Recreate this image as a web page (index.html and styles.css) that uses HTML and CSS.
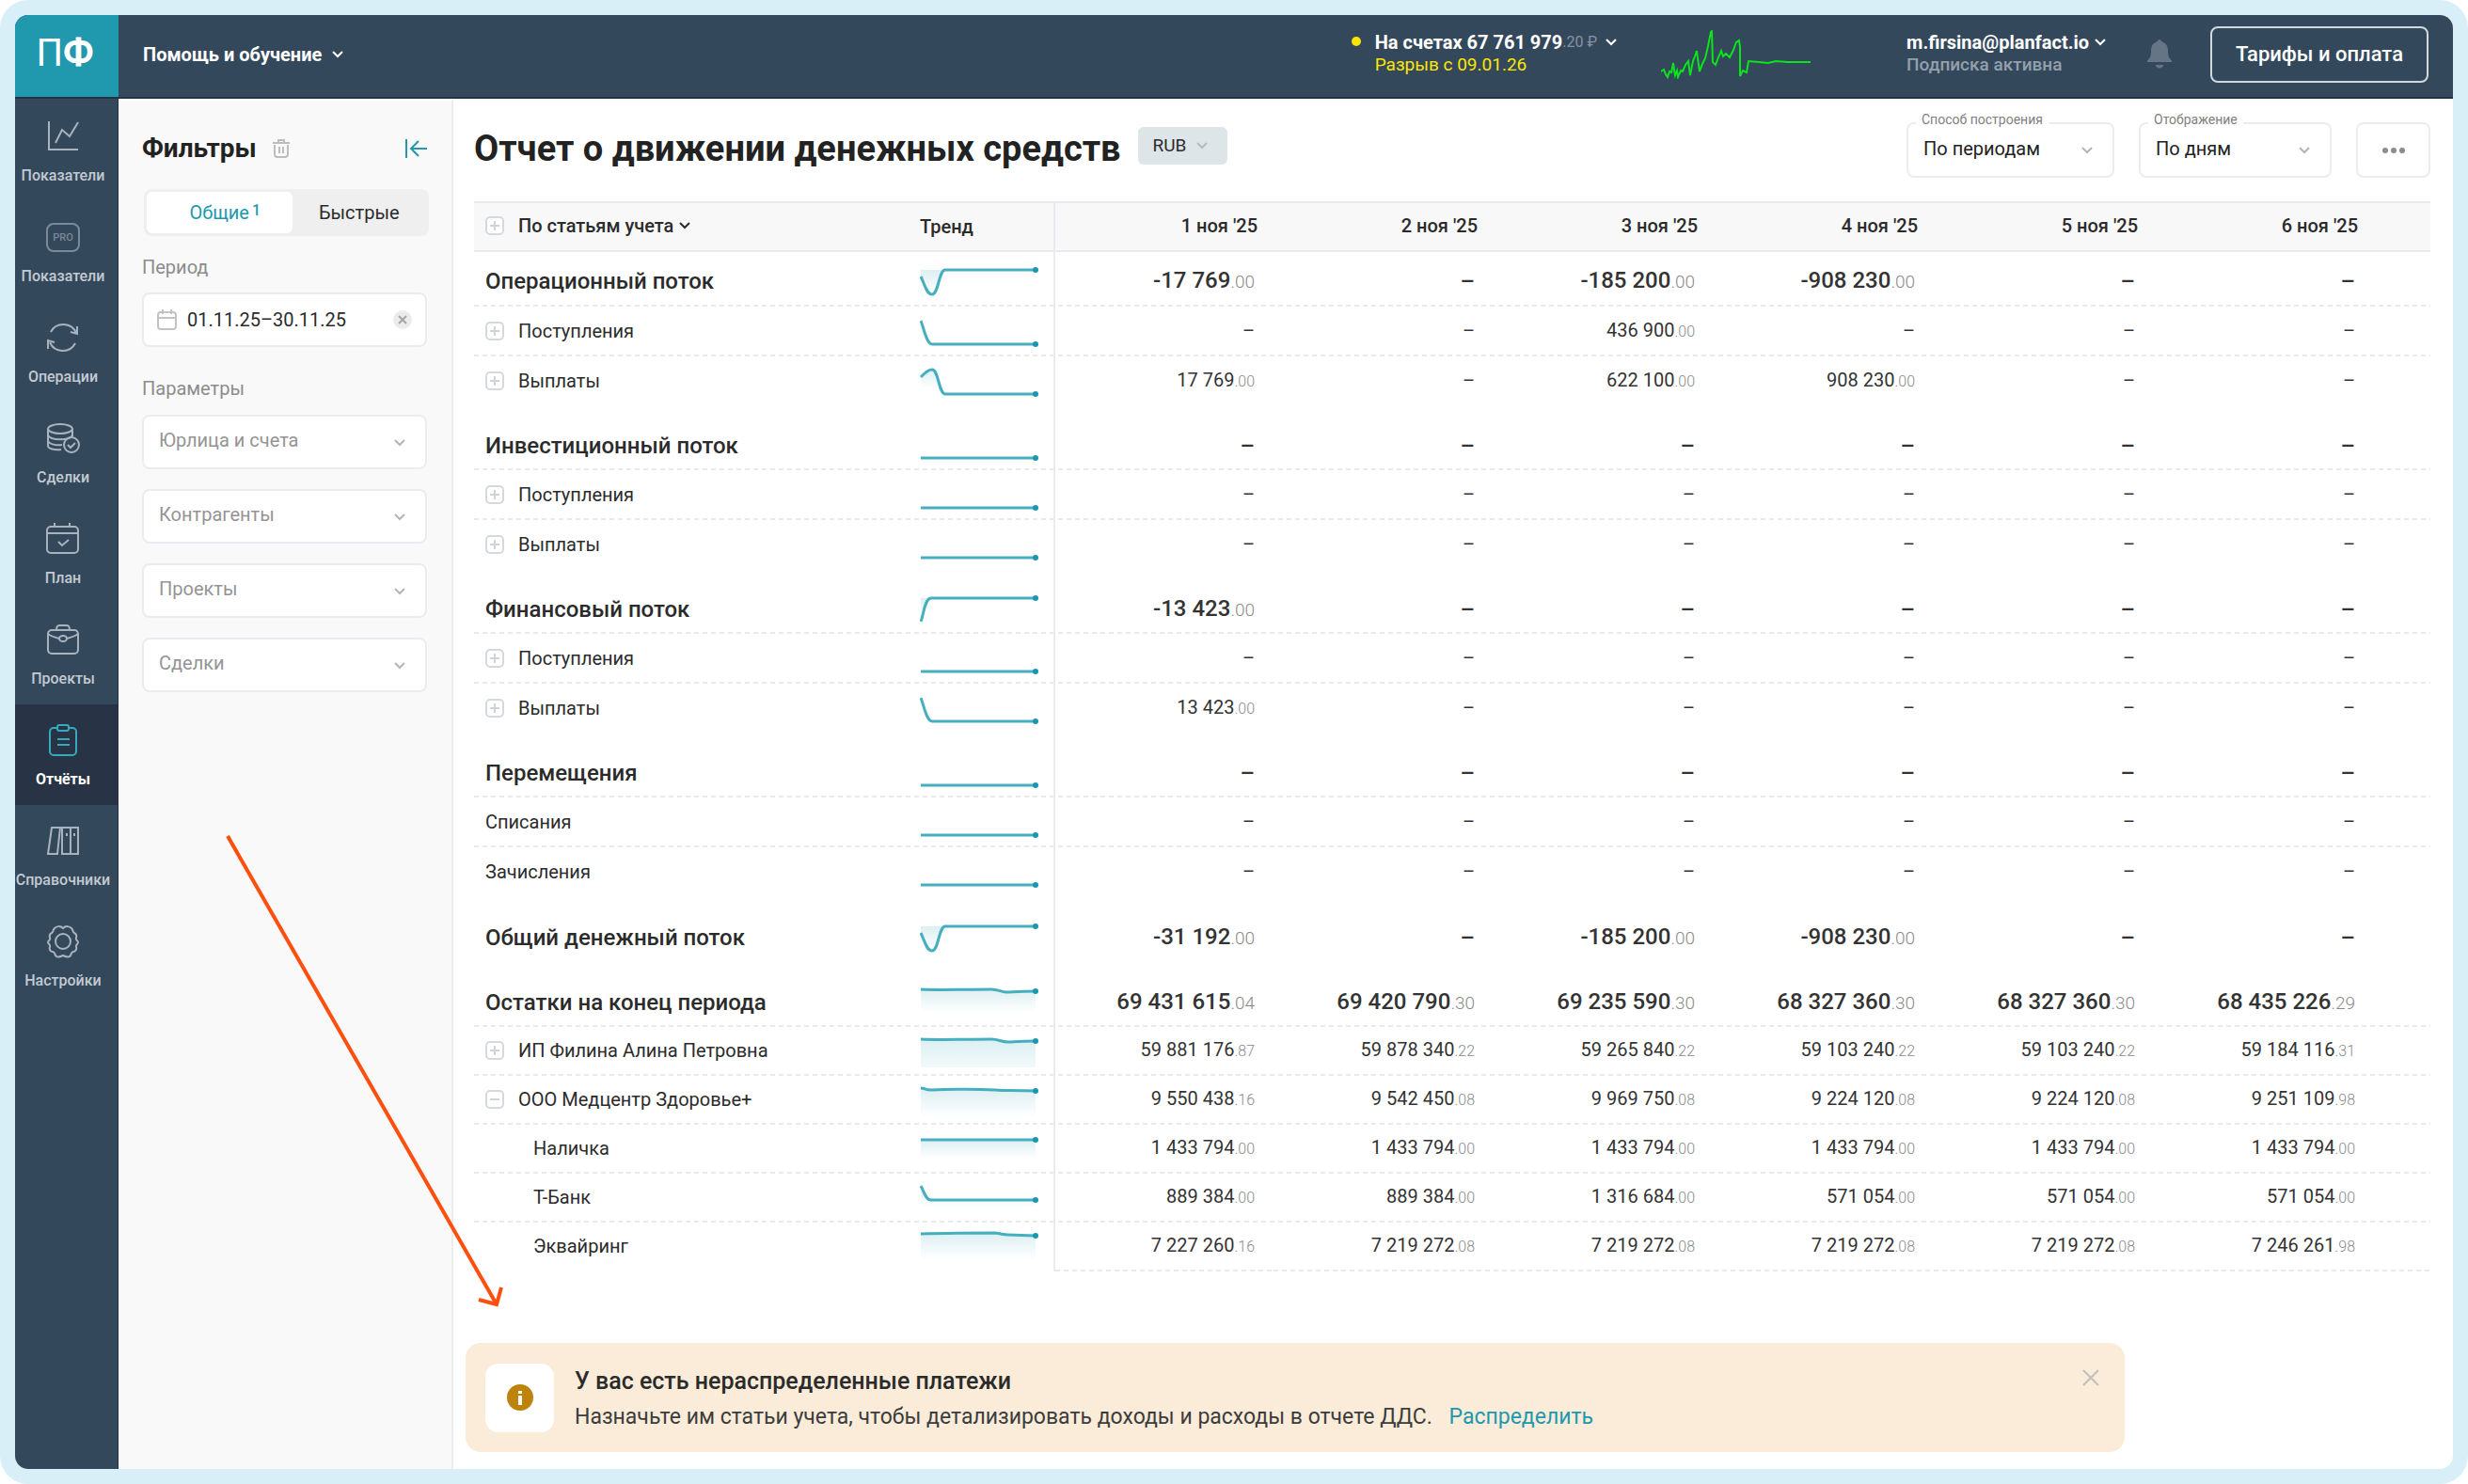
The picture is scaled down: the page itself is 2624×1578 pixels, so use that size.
FILE: index.html
```html
<!DOCTYPE html>
<html lang="ru">
<head>
<meta charset="utf-8">
<meta name="viewport" content="width=device-width, initial-scale=1">
<title>Отчет о движении денежных средств</title>
<link rel="stylesheet" href="styles.css">
</head>
<body>
<svg class="sprite" aria-hidden="true">
  <defs>
    <linearGradient id="fade" x1="0" y1="0" x2="0" y2="1"><stop offset="0" stop-color="#2a9db0" stop-opacity=".16"/><stop offset="1" stop-color="#2a9db0" stop-opacity="0"/></linearGradient>
    <linearGradient id="haze" x1="0" y1="0" x2="0" y2="1"><stop offset="0" stop-color="#2a9db0" stop-opacity=".16"/><stop offset="1" stop-color="#2a9db0" stop-opacity=".06"/></linearGradient>
  </defs>
  <symbol id="chev" viewBox="0 0 14 10"><path d="M2 2l5 5 5-5" fill="none" stroke="currentColor" stroke-width="2"/></symbol>
  <symbol id="plus" viewBox="0 0 20 20"><rect x="1" y="1" width="18" height="18" rx="4" fill="#fff" stroke="#d5d8dc" stroke-width="2"/><path d="M5 10h10M10 5v10" stroke="#cfd3d8" stroke-width="2"/></symbol>
  <symbol id="minus" viewBox="0 0 20 20"><rect x="1" y="1" width="18" height="18" rx="4" fill="#fff" stroke="#d5d8dc" stroke-width="2"/><path d="M5 10h10" stroke="#cfd3d8" stroke-width="2"/></symbol>
  <symbol id="s-dip" viewBox="0 0 128 52"><path class="area" d="M1 15V22C5 30 7 41 13 41C20 41 20 15 27 15z"/><path class="line" d="M1 22C5 30 7 41 13 41C20 41 20 15 27 15H123"/><circle class="dot" cx="123" cy="15" r="3"/></symbol>
  <symbol id="s-drop" viewBox="0 0 128 52"><path class="line" d="M1 15C4 22 7 40 13 40H123"/><circle class="dot" cx="123" cy="40" r="3"/></symbol>
  <symbol id="s-hump" viewBox="0 0 128 52"><path class="area" d="M1 34V22C5 18 8 14 13 14C18 14 20 28 22 34z"/><path class="line" d="M1 22C5 18 8 14 13 14C20 14 20 40 27 40H123"/><circle class="dot" cx="123" cy="40" r="3"/></symbol>
  <symbol id="s-flat" viewBox="0 0 128 52"><path class="line" d="M1 40H123"/><circle class="dot" cx="123" cy="40" r="3"/></symbol>
  <symbol id="s-rise" viewBox="0 0 128 52"><path class="area" d="M1 15V34C4 24 6 15 11 15z"/><path class="line" d="M1 40C4 33 5 15 12 15H123"/><circle class="dot" cx="123" cy="15" r="3"/></symbol>
  <symbol id="s-total" viewBox="0 0 128 52"><path class="area" d="M1 13H83L92 15H123V37H1z"/><path class="line" d="M1 13C20 14 50 13 76 13C84 13 86 16 92 16C98 16 102 15 123 15"/><circle class="dot" cx="123" cy="15" r="3"/></symbol>
  <symbol id="s-person" viewBox="0 0 128 52"><path class="haze" d="M1 13H83L92 15H123V43H1z"/><path class="line" d="M1 13C20 14 50 13 76 13C84 13 86 16 94 16C100 16 102 15 123 15"/><circle class="dot" cx="123" cy="15" r="3"/></symbol>
  <symbol id="s-company" viewBox="0 0 128 52"><path class="area" d="M1 13L10 15H123V44H1z"/><path class="line" d="M1 13C6 13 5 15 12 15C40 14 60 14 80 15C92 16 100 15 123 16"/><circle class="dot" cx="123" cy="16" r="3"/></symbol>
  <symbol id="s-cash" viewBox="0 0 128 52"><path class="area" d="M1 16H123V36H1z"/><path class="line" d="M1 16H123"/><circle class="dot" cx="123" cy="16" r="3"/></symbol>
  <symbol id="s-bank" viewBox="0 0 128 52"><path class="area" d="M1 14L10 28H123V36H1z"/><path class="line" d="M1 13C4 18 6 28 12 28H123"/><circle class="dot" cx="123" cy="28" r="3"/></symbol>
  <symbol id="s-acq" viewBox="0 0 128 52"><path class="area" d="M1 11H83L92 13H123V40H1z"/><path class="line" d="M1 12C30 11 70 11 80 11C88 12 88 13 94 13L123 14"/><circle class="dot" cx="123" cy="14" r="3"/></symbol>
</svg>

<div class="frame">
  <header class="topbar">
    <a class="logo" href="#" aria-label="ПланФакт"><span>П</span><b>Ф</b></a>
    <div class="topbar-main">
      <button class="help" type="button">Помощь и обучение <svg class="chev"><use href="#chev"/></svg></button>
      <div class="balance">
        <span class="status-dot"></span>
        <div class="stack">
          <button class="stack-top" type="button">На счетах 67 761 979<small>.20 ₽</small><svg class="chev"><use href="#chev"/></svg></button>
          <span class="gap-alert">Разрыв с 09.01.26</span>
        </div>
      </div>
      <svg class="pulse" viewBox="0 0 159 52" aria-hidden="true"><path d="M0 44L3 42L5 47L7 50L9 44L11 45L13 35L14 42L15 48L17 43L18 50L21 43L23 44L26 37L29 33L31 48L34 33L36 28L38 22L39 30L41 44L44 36L47 30L50 17L53 2L54 1L55 34L58 37L61 29L64 22L66 28L69 25L73 29L77 21L80 13L83 11L84 18L84 49L87 43L91 45L93 33L104 34L114 35L122 33L134 34H159"/></svg>
      <div class="stack account">
        <button class="stack-top" type="button">m.firsina@planfact.io<svg class="chev"><use href="#chev"/></svg></button>
        <span class="plan-state">Подписка активна</span>
      </div>
      <button class="bell" type="button" aria-label="Уведомления"><svg viewBox="0 0 26 32"><path d="M13 0c1.500 0 2 1 2.300 2.300C20 3.500 22 7.500 22 12c0 6 1.500 8.500 4 10.500V24H0v-1.500C2.500 20.500 4 18 4 12c0-4.500 2-8.500 6.700-9.700C11 1 11.500 0 13 0zM8.500 27h9c-.8 2-2.500 3.500-4.500 3.500S9.300 29 8.500 27z"/></svg></button>
      <a class="tariffs" href="#">Тарифы и оплата</a>
    </div>
  </header>

  <div class="body">
    <nav class="sidebar">
      <a href="#"><svg viewBox="0 0 36 36"><path d="M3 2v30h31M10 25l7-14 8 7 9-15"/></svg>Показатели</a>
      <a href="#"><svg viewBox="0 0 36 36" class="dim"><rect x="1" y="4" width="34" height="29" rx="7"/><text x="18" y="22" text-anchor="middle">PRO</text></svg>Показатели</a>
      <a href="#"><svg viewBox="0 0 36 36"><path d="M5 12a15 15 0 0 1 27 1M31 24a15 15 0 0 1-27-1M33 6v8l-7-2M2 30v-9l7 2"/></svg>Операции</a>
      <a href="#"><svg viewBox="0 0 36 36"><ellipse cx="15" cy="8" rx="13" ry="5"/><path d="M2 8v18c0 3 7 5 14 4M28 8v8M2 14c0 7 26 7 26 0M2 20c0 4 8 6 15 5"/><circle cx="27" cy="25" r="8"/><path d="M23 25l3 3 5-5"/></svg>Сделки</a>
      <a href="#"><svg viewBox="0 0 36 36"><rect x="1" y="5" width="33" height="28" rx="4"/><path d="M1 12h33M9 1v5M25 1v5M13 21l4 4 7-6"/></svg>План</a>
      <a href="#"><svg viewBox="0 0 36 36"><rect x="2" y="8" width="32" height="25" rx="4"/><path d="M11 8c0-3 1-5 3-5h8c2 0 3 2 3 5M2 12c4 3 8 4 12 5M34 12c-4 3-8 4-12 5"/><ellipse cx="18" cy="17" rx="4" ry="3"/></svg>Проекты</a>
      <a href="#" class="active" aria-current="page"><svg viewBox="0 0 36 36"><path d="M12 5H8a4 4 0 0 0-4 4v21a4 4 0 0 0 4 4h20a4 4 0 0 0 4-4V9a4 4 0 0 0-4-4h-4M12 17h13M12 23h13"/><rect x="12" y="2" width="12" height="6" rx="2"/></svg>Отчёты</a>
      <a href="#"><svg viewBox="0 0 36 36"><path d="M6 4h9l-3 28H2zM17 4h9v28h-9zM26 4h8v28h-8zM22 10v3M30 10v3"/></svg>Справочники</a>
      <a href="#"><svg viewBox="0 0 36 36"><path d="M18 4c3-3 7-2 9 0s1 4 3 5 3 2 2 5 2 3 2 5-3 3-2 5-1 5-3 5-2 2-3 4-4 2-8 0c-4 2-7 2-8 0s-1-4-3-4-4-2-3-5-2-3-2-5 3-2 2-5 0-4 2-5 1-3 3-5 6-3 9 0z"/><circle cx="18" cy="18" r="8"/></svg>Настройки</a>
    </nav>

    <aside class="filters">
      <div class="filters-head">
        <h2>Фильтры</h2>
        <button class="icon-btn" type="button" aria-label="Очистить фильтры"><svg class="trash" viewBox="0 0 18 20"><path d="M0 4h18M6 4V1h6v3M2 6v10a3 3 0 0 0 3 3h8a3 3 0 0 0 3-3V6M7 8v7M11 8v7"/></svg></button>
        <button class="icon-btn collapse" type="button" aria-label="Свернуть"><svg viewBox="0 0 24 20"><path d="M2 0v20M8 10h16M15 2l-8 8 8 8"/></svg></button>
      </div>
      <div class="tabs">
        <button class="tab on" type="button">Общие<sup>1</sup></button>
        <button class="tab" type="button">Быстрые</button>
      </div>
      <label class="caption" for="period">Период</label>
      <div class="field">
        <svg class="cal" viewBox="0 0 21 22"><rect x="1" y="3" width="19" height="18" rx="3"/><path d="M1 9h19M6 0v5M15 0v5"/></svg>
        <input id="period" type="text" value="01.11.25–30.11.25">
        <button class="clear" type="button" aria-label="Сбросить период"><svg viewBox="0 0 20 20"><path d="M6 6l8 8M14 6l-8 8"/></svg></button>
      </div>
      <p class="caption params">Параметры</p>
      <div class="selects">
        <div class="select"><select aria-label="Юрлица и счета"><option>Юрлица и счета</option></select><svg class="chev"><use href="#chev"/></svg></div>
        <div class="select"><select aria-label="Контрагенты"><option>Контрагенты</option></select><svg class="chev"><use href="#chev"/></svg></div>
        <div class="select"><select aria-label="Проекты"><option>Проекты</option></select><svg class="chev"><use href="#chev"/></svg></div>
        <div class="select"><select aria-label="Сделки"><option>Сделки</option></select><svg class="chev"><use href="#chev"/></svg></div>
      </div>
    </aside>

    <main class="report">
      <div class="report-head">
        <h1>Отчет о движении денежных средств</h1>
        <button class="currency" type="button">RUB <svg class="chev"><use href="#chev"/></svg></button>
        <div class="controls">
          <div class="select titled wide"><label for="mode">Способ построения</label><select id="mode"><option>По периодам</option></select><svg class="chev"><use href="#chev"/></svg></div>
          <div class="select titled"><label for="scale">Отображение</label><select id="scale"><option>По дням</option></select><svg class="chev"><use href="#chev"/></svg></div>
          <button class="more" type="button" aria-label="Ещё"><svg viewBox="0 0 26 8"><circle cx="4" cy="4" r="3"/><circle cx="13" cy="4" r="3"/><circle cx="22" cy="4" r="3"/></svg></button>
        </div>
      </div>

      <table class="grid">
        <colgroup><col class="c-name"><col class="c-trend"><col><col><col><col><col><col><col class="c-rest"></colgroup>
        <thead>
          <tr><th class="name"><div class="cell"><button class="toggle" type="button" aria-label="Развернуть все"><svg><use href="#plus"/></svg></button><button class="by" type="button">По статьям учета <svg class="chev"><use href="#chev"/></svg></button></div></th><th class="trend">Тренд</th><th>1 ноя '25</th><th>2 ноя '25</th><th>3 ноя '25</th><th>4 ноя '25</th><th>5 ноя '25</th><th>6 ноя '25</th><td></td></tr>
        </thead>
        <tbody>
          <tr class="group first"><th class="name">Операционный поток</th><td class="trend"><svg><use href="#s-dip"/></svg></td><td>-17 769<small>.00</small></td><td>–</td><td>-185 200<small>.00</small></td><td>-908 230<small>.00</small></td><td>–</td><td>–</td><td></td></tr>
          <tr><th class="name"><div class="cell"><button class="toggle" type="button" aria-label="Развернуть"><svg><use href="#plus"/></svg></button>Поступления</div></th><td class="trend"><svg><use href="#s-drop"/></svg></td><td>–</td><td>–</td><td>436 900<small>.00</small></td><td>–</td><td>–</td><td>–</td><td></td></tr>
          <tr class="end"><th class="name"><div class="cell"><button class="toggle" type="button" aria-label="Развернуть"><svg><use href="#plus"/></svg></button>Выплаты</div></th><td class="trend"><svg><use href="#s-hump"/></svg></td><td>17 769<small>.00</small></td><td>–</td><td>622 100<small>.00</small></td><td>908 230<small>.00</small></td><td>–</td><td>–</td><td></td></tr>
        </tbody>
        <tbody>
          <tr class="group"><th class="name">Инвестиционный поток</th><td class="trend"><svg><use href="#s-flat"/></svg></td><td>–</td><td>–</td><td>–</td><td>–</td><td>–</td><td>–</td><td></td></tr>
          <tr><th class="name"><div class="cell"><button class="toggle" type="button" aria-label="Развернуть"><svg><use href="#plus"/></svg></button>Поступления</div></th><td class="trend"><svg><use href="#s-flat"/></svg></td><td>–</td><td>–</td><td>–</td><td>–</td><td>–</td><td>–</td><td></td></tr>
          <tr class="end"><th class="name"><div class="cell"><button class="toggle" type="button" aria-label="Развернуть"><svg><use href="#plus"/></svg></button>Выплаты</div></th><td class="trend"><svg><use href="#s-flat"/></svg></td><td>–</td><td>–</td><td>–</td><td>–</td><td>–</td><td>–</td><td></td></tr>
        </tbody>
        <tbody>
          <tr class="group"><th class="name">Финансовый поток</th><td class="trend"><svg><use href="#s-rise"/></svg></td><td>-13 423<small>.00</small></td><td>–</td><td>–</td><td>–</td><td>–</td><td>–</td><td></td></tr>
          <tr><th class="name"><div class="cell"><button class="toggle" type="button" aria-label="Развернуть"><svg><use href="#plus"/></svg></button>Поступления</div></th><td class="trend"><svg><use href="#s-flat"/></svg></td><td>–</td><td>–</td><td>–</td><td>–</td><td>–</td><td>–</td><td></td></tr>
          <tr class="end"><th class="name"><div class="cell"><button class="toggle" type="button" aria-label="Развернуть"><svg><use href="#plus"/></svg></button>Выплаты</div></th><td class="trend"><svg><use href="#s-drop"/></svg></td><td>13 423<small>.00</small></td><td>–</td><td>–</td><td>–</td><td>–</td><td>–</td><td></td></tr>
        </tbody>
        <tbody>
          <tr class="group"><th class="name">Перемещения</th><td class="trend"><svg><use href="#s-flat"/></svg></td><td>–</td><td>–</td><td>–</td><td>–</td><td>–</td><td>–</td><td></td></tr>
          <tr><th class="name">Списания</th><td class="trend"><svg><use href="#s-flat"/></svg></td><td>–</td><td>–</td><td>–</td><td>–</td><td>–</td><td>–</td><td></td></tr>
          <tr class="end"><th class="name">Зачисления</th><td class="trend"><svg><use href="#s-flat"/></svg></td><td>–</td><td>–</td><td>–</td><td>–</td><td>–</td><td>–</td><td></td></tr>
        </tbody>
        <tbody class="totals">
          <tr class="group end"><th class="name">Общий денежный поток</th><td class="trend"><svg><use href="#s-dip"/></svg></td><td>-31 192<small>.00</small></td><td>–</td><td>-185 200<small>.00</small></td><td>-908 230<small>.00</small></td><td>–</td><td>–</td><td></td></tr>
          <tr class="group"><th class="name">Остатки на конец периода</th><td class="trend"><svg><use href="#s-total"/></svg></td><td>69 431 615<small>.04</small></td><td>69 420 790<small>.30</small></td><td>69 235 590<small>.30</small></td><td>68 327 360<small>.30</small></td><td>68 327 360<small>.30</small></td><td>68 435 226<small>.29</small></td><td></td></tr>
          <tr><th class="name"><div class="cell"><button class="toggle" type="button" aria-label="Развернуть"><svg><use href="#plus"/></svg></button>ИП Филина Алина Петровна</div></th><td class="trend"><svg><use href="#s-person"/></svg></td><td>59 881 176<small>.87</small></td><td>59 878 340<small>.22</small></td><td>59 265 840<small>.22</small></td><td>59 103 240<small>.22</small></td><td>59 103 240<small>.22</small></td><td>59 184 116<small>.31</small></td><td></td></tr>
          <tr><th class="name"><div class="cell"><button class="toggle" type="button" aria-label="Свернуть"><svg><use href="#minus"/></svg></button>ООО Медцентр Здоровье+</div></th><td class="trend"><svg><use href="#s-company"/></svg></td><td>9 550 438<small>.16</small></td><td>9 542 450<small>.08</small></td><td>9 969 750<small>.08</small></td><td>9 224 120<small>.08</small></td><td>9 224 120<small>.08</small></td><td>9 251 109<small>.98</small></td><td></td></tr>
          <tr><th class="name child">Наличка</th><td class="trend"><svg><use href="#s-cash"/></svg></td><td>1 433 794<small>.00</small></td><td>1 433 794<small>.00</small></td><td>1 433 794<small>.00</small></td><td>1 433 794<small>.00</small></td><td>1 433 794<small>.00</small></td><td>1 433 794<small>.00</small></td><td></td></tr>
          <tr><th class="name child">Т-Банк</th><td class="trend"><svg><use href="#s-bank"/></svg></td><td>889 384<small>.00</small></td><td>889 384<small>.00</small></td><td>1 316 684<small>.00</small></td><td>571 054<small>.00</small></td><td>571 054<small>.00</small></td><td>571 054<small>.00</small></td><td></td></tr>
          <tr class="last"><th class="name child">Эквайринг</th><td class="trend"><svg><use href="#s-acq"/></svg></td><td>7 227 260<small>.16</small></td><td>7 219 272<small>.08</small></td><td>7 219 272<small>.08</small></td><td>7 219 272<small>.08</small></td><td>7 219 272<small>.08</small></td><td>7 246 261<small>.98</small></td><td></td></tr>
        </tbody>
      </table>

      <section class="notice">
        <span class="notice-icon"><svg viewBox="0 0 28 28"><circle cx="14" cy="14" r="14"/><path d="M12 12h4v10h-4zM12 7h4v3h-4z"/></svg></span>
        <div class="notice-text">
          <h3>У вас есть нераспределенные платежи</h3>
          <p>Назначьте им статьи учета, чтобы детализировать доходы и расходы в отчете ДДС. <a href="#">Распределить</a></p>
        </div>
        <button class="icon-btn close" type="button" aria-label="Закрыть"><svg viewBox="0 0 18 18"><path d="M1 1l16 16M17 1L1 17"/></svg></button>
      </section>
    </main>
  </div>
  <svg class="pointer" viewBox="0 0 300 510" aria-hidden="true"><path d="M2 2L288 500M269 495l19 5 5-18"/></svg>
</div>
</body>
</html>
```
FILE: styles.css
```css
* { box-sizing: border-box; }
body { margin: 0; background: #fff; color: #2b2b2b; font: 400 20px/24px Roboto, "Noto Sans", sans-serif; }
h1, h2, h3, p { margin: 0; }
button, input, select { font: inherit; color: inherit; margin: 0; }
button { padding: 0; border: 0; background: none; cursor: pointer; }
a { text-decoration: none; color: inherit; }
svg { display: block; fill: none; }
.sprite { position: absolute; width: 0; height: 0; }
.chev { width: 14px; height: 10px; flex: none; }

.frame { position: relative; display: flex; flex-direction: column; min-height: 100vh; border: 16px solid #d8eff7; border-radius: 30px; overflow: hidden; background: #fff; }

/* Top bar */
.topbar { display: flex; height: 89px; background: #34485c; border-bottom: 2px solid #22324a; color: #fff; }
.logo { display: flex; align-items: center; justify-content: center; width: 110px; padding: 0 4px 5px 0; background: #2098ae; font-size: 40px; line-height: 48px; }
.topbar-main { flex: 1; display: flex; align-items: center; padding: 0 26px 3px; }
.help { display: flex; align-items: center; gap: 10px; font-weight: 700; }
.balance { display: flex; align-items: flex-start; gap: 15px; margin-left: auto; }
.status-dot { width: 10px; height: 10px; margin-top: 7px; border-radius: 50%; background: #ffe600; }
.stack { display: flex; flex-direction: column; align-items: flex-start; padding-bottom: 3px; }
.stack-top { display: flex; align-items: center; height: 25px; font-weight: 700; }
.stack-top small { font-size: 16px; font-weight: 400; color: #8793a0; }
.balance .chev { margin-left: 8px; }
.account .chev { margin-left: 5px; }
.gap-alert { font-size: 19px; color: #ffe600; }
.plan-state { font-size: 19px; font-weight: 500; color: #93a0ac; }
.pulse { width: 159px; height: 52px; margin: 0 102px 0 46px; stroke: #0be31a; stroke-width: 2; }
.bell { margin: 0 41px 0 43px; }
.bell svg { width: 26px; height: 32px; fill: #667586; }
.tariffs { display: flex; align-items: center; height: 60px; padding: 0 25px; border: 2px solid #d3d8dd; border-radius: 8px; font-size: 22px; font-weight: 500; }

.body { flex: 1; display: flex; }

/* Navigation */
.sidebar { flex: none; width: 110px; padding-top: 2px; background: #34485c; border-right: 1px solid #22324a; }
.sidebar a { display: flex; flex-direction: column; align-items: center; gap: 14px; height: 107px; padding: 20px 7px 0 0; font-size: 16px; line-height: 20px; font-weight: 500; color: #c3cad1; }
.sidebar svg { width: 36px; height: 36px; flex: none; stroke: #a9b3bd; stroke-width: 2; }
.sidebar .dim { stroke: #7c8a98; }
.sidebar text { fill: #7c8a98; stroke: none; font-size: 11px; font-weight: 500; }
.sidebar .active { background: #283445; color: #fff; font-weight: 700; }
.sidebar .active svg { stroke: #38a9bd; }

/* Filters */
.filters { flex: none; width: 356px; padding: 34px 26px 0 25px; background: #f9f9f9; border-top: 2px solid #fff; border-right: 2px solid #ececef; }
.filters-head { display: flex; align-items: center; gap: 17px; height: 34px; }
.filters-head h2 { font-size: 28px; line-height: 34px; font-weight: 700; color: #222; }
.trash { width: 18px; height: 20px; stroke: #bdbdbd; stroke-width: 2; }
.collapse { margin-left: auto; }
.collapse svg { width: 24px; height: 20px; stroke: #2098ae; stroke-width: 2; }
.tabs { display: flex; height: 50px; margin: 26px -2px 0 2px; padding: 3px; border-radius: 8px; background: #efefef; }
.tab { flex: 1; border-radius: 6px; }
.tab.on { padding-left: 12px; background: #fff; color: #2098ae; }
.tab sup { margin-left: 3px; font-size: 16px; line-height: 16px; font-weight: 500; vertical-align: 4px; }
.caption { display: block; margin: 21px 0 15px; color: #8c8c8c; }
.caption.params { margin-top: 32px; margin-bottom: 16px; }
.field { display: flex; align-items: center; gap: 11px; height: 58px; padding: 0 14px; border: 2px solid #ececf0; border-radius: 8px; background: #fff; }
.field input { flex: 1; min-width: 0; padding: 0; border: 0; outline: 0; background: none; }
.cal { width: 21px; height: 22px; flex: none; stroke: #c3c3c3; stroke-width: 2; }
.clear { width: 20px; height: 20px; border-radius: 50%; background: #ececec; }
.clear svg { stroke: #a5a5a5; stroke-width: 2; }
.selects { display: flex; flex-direction: column; gap: 21px; }
.select { position: relative; height: 58px; }
.select select { width: 100%; height: 100%; padding: 0 40px 4px 16px; border: 2px solid #ececf0; border-radius: 8px; background: #fff; color: #949494; appearance: none; outline: 0; }
.select .chev { position: absolute; right: 22px; top: 25px; color: #b5b5b5; pointer-events: none; }

/* Report */
.report { flex: 1; min-width: 0; display: flex; flex-direction: column; padding: 25px 24px 18px 13px; }
.report-head { display: flex; align-items: flex-start; height: 59px; margin-left: 9px; }
.report-head h1 { font-size: 38px; line-height: 56px; font-weight: 700; color: #222; white-space: nowrap; }
.currency { display: flex; align-items: center; gap: 10px; height: 40px; margin: 5px 0 0 18px; padding: 0 20px 0 16px; border-radius: 6px; background: #dde5e8; font-size: 19px; }
.currency .chev { color: #b3bcc2; }
.controls { display: flex; gap: 26px; margin-left: auto; }
.select.titled { width: 205px; height: 59px; }
.select.titled.wide { width: 221px; }
.titled select { color: #222; }
.titled label { position: absolute; left: 10px; top: -11px; padding: 0 6px; background: #fff; font-size: 14px; line-height: 16px; color: #808080; }
.more { display: flex; align-items: center; justify-content: center; width: 79px; height: 59px; border: 2px solid #ececf0; border-radius: 8px; }
.more svg { width: 26px; height: 8px; fill: #8c8c8c; }

.grid { width: calc(100% - 9px); margin: 25px 0 0 9px; table-layout: fixed; border-collapse: separate; border-spacing: 0; }
.c-name { width: 474px; }
.c-trend { width: 142px; }
.c-rest { width: 60px; }
.grid th, .grid td { height: 53px; padding: 0 20px 2px 0; text-align: right; font-weight: 400; white-space: nowrap; }
.grid td { color: #333; }
.grid small { font-size: 16px; font-weight: 300; color: #8a8a8a; }
.grid .name { padding: 0 0 2px 12px; text-align: left; }
.grid .child { padding-left: 63px; }
.grid .trend { padding: 0; text-align: left; }
.grid td.trend { vertical-align: top; }
.grid .trend + * { border-left: 2px solid #ececf0; }
.grid thead th, .grid thead td { height: 54px; padding-right: 17px; padding-bottom: 2px; background: #f8f8f8; border-top: 2px solid #e9eaee; border-bottom: 2px solid #e9eaee; font-weight: 500; }
.grid thead .trend + * { border-left-color: #e9eaee; }
.cell { display: flex; align-items: center; gap: 15px; }
.toggle svg { width: 20px; height: 20px; }
.by { display: flex; align-items: center; gap: 5px; }
.grid tbody tr { background: repeating-linear-gradient(90deg, #e8e9ed 0 5px, transparent 5px 9px) left bottom / 100% 2px no-repeat; }
.grid tbody .end, .grid tbody .last { background: none; }
.grid .last td:nth-child(n+3) { background: repeating-linear-gradient(90deg, #e8e9ed 0 5px, transparent 5px 9px) left bottom / 100% 2px no-repeat; }
.trend svg { width: 128px; height: 52px; }
.grid .group th, .grid .group td { height: 68px; padding-top: 15px; padding-bottom: 0; font-size: 24px; font-weight: 500; }
.grid .group small { font-size: 19px; font-weight: 300; }
.grid .first th, .grid .first td { height: 58px; padding-top: 4px; }
.grid .totals th, .grid .totals td { height: 52px; }
.grid .totals .group th, .grid .totals .group td { height: 69px; padding-top: 16px; }
.area { fill: url(#fade); }
.haze { fill: url(#haze); }
.line { stroke: #45afc0; stroke-width: 3; }
.dot { fill: #1997ad; }

/* Notice */
.notice { display: flex; align-items: center; max-width: 1764px; min-height: 116px; margin-top: auto; padding: 0 27px 0 21px; border-radius: 16px; background: #faecd9; }
.notice-icon { display: flex; align-items: center; justify-content: center; flex: none; width: 73px; height: 73px; border-radius: 14px; background: #fff; }
.notice-icon svg { width: 28px; height: 28px; fill: #bd830c; }
.notice-icon path { fill: #fff; }
.notice-text { flex: 1; margin-left: 22px; padding-top: 3px; }
.notice h3 { font-size: 25px; line-height: 38px; font-weight: 500; }
.notice p { font-size: 23px; line-height: 38px; color: #3c3c3c; }
.notice a { margin-left: 12px; color: #2098ae; }
.close { align-self: flex-start; margin-top: 28px; }
.close svg { width: 18px; height: 18px; stroke: #bfbfbd; stroke-width: 2; }

/* Hand-drawn hint over the page */
.pointer { position: absolute; left: 224px; top: 871px; width: 300px; height: 510px; stroke: #ff4f0f; stroke-width: 4; pointer-events: none; }
```
